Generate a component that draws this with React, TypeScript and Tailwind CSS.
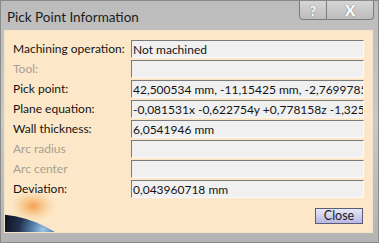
const rows = [
  { label: "Machining operation:", value: "Not machined", enabled: true },
  { label: "Tool:", value: "", enabled: false },
  {
    label: "Pick point:",
    value: "42,500534 mm, -11,15425 mm, -2,7699785 mm",
    enabled: true,
  },
  {
    label: "Plane equation:",
    value: "-0,081531x -0,622754y +0,778158z -1,325789",
    enabled: true,
  },
  { label: "Wall thickness:", value: "6,0541946 mm", enabled: true },
  { label: "Arc radius", value: "", enabled: false },
  { label: "Arc center", value: "", enabled: false },
  { label: "Deviation:", value: "0,043960718 mm", enabled: true },
];

function Globe() {
  return (
    <svg className="absolute left-0 bottom-0" width="70" height="50" viewBox="0 0 70 50">
      <defs>
        <radialGradient id="glow" cx="0.5" cy="0.5" r="0.5">
          <stop offset="0" stopColor="#f39a48" stopOpacity="0.95" />
          <stop offset="0.5" stopColor="#f7c486" stopOpacity="0.6" />
          <stop offset="1" stopColor="#fce8c8" stopOpacity="0" />
        </radialGradient>
        <radialGradient id="planet" gradientUnits="userSpaceOnUse" cx="38" cy="48" r="40">
          <stop offset="0" stopColor="#a4c8e6" />
          <stop offset="0.25" stopColor="#5a86b4" />
          <stop offset="0.6" stopColor="#22324f" />
          <stop offset="1" stopColor="#0c1220" />
        </radialGradient>
      </defs>
      <ellipse cx="28" cy="24" rx="26" ry="18" fill="url(#glow)" />
      <circle cx="-12" cy="147" r="115" fill="url(#planet)" />
    </svg>
  );
}

export default function App() {
  return (
    <div
      className="w-[379px] h-[243px] relative overflow-hidden bg-gradient-to-b from-[#bcbcbc] via-[#c8c8c8] to-[#b4b4b4] border border-[#8a8a8a] text-[#1a1a1a]"
      style={{ fontFamily: 'Lato, "Open Sans", sans-serif' }}
    >
      <div className="h-[29px] flex items-start justify-between">
        <div className="pl-[6px] pt-[6px] text-[13.5px] text-[#1c1c1c]">
          Pick Point Information
        </div>
        <div className="flex mr-[4px] -mt-px">
          <div className="w-[28px] h-[20px] flex items-center justify-center rounded-bl-[4px] border border-[#7c7c7c] bg-gradient-to-b from-[#d6d6d6] to-[#bdbdbd] text-[14px] font-black text-white [text-shadow:0_0_1px_#444]">
            ?
          </div>
          <div className="w-[47px] h-[20px] flex items-center justify-center rounded-br-[4px] border border-l-0 border-[#7c7c7c] bg-gradient-to-b from-[#d6d6d6] to-[#bdbdbd] text-[15px] font-black text-white [text-shadow:0_0_1px_#444]">
            X
          </div>
        </div>
      </div>

      <div className="relative ml-[3px] w-[369px] h-[203px] border border-[#f4e4c6] bg-[#fce8c8] pt-[9px] pl-[8px] pr-[8px] overflow-hidden">
        <Globe />
        <div className="relative flex flex-col gap-[2px]">
          {rows.map((r) => (
            <div key={r.label} className="flex items-center h-[18px]">
              <div
                className={`w-[118px] whitespace-nowrap text-[12px] leading-none ${
                  r.enabled ? "text-[#141414]" : "text-[#a89e92]"
                }`}
              >
                {r.label}
              </div>
              <div className="w-[233px] h-[18px] bg-[#f0f0f0] border-t border-l border-[#7a7a7a] border-b-[#fafafa] border-r-[#fafafa] border-b border-r overflow-hidden whitespace-nowrap pl-[1px] text-[12px] leading-[17px] text-[#141414]">
                {r.value}
              </div>
            </div>
          ))}
        </div>
        <div className="relative flex justify-end mt-[10px] pr-[1px]">
          <div className="w-[48px] h-[16px] flex items-center justify-center border border-[#5c5c78] bg-gradient-to-b from-[#e8e8f8] to-[#b8b8e2] text-[12.5px] leading-none">
            Close
          </div>
        </div>
      </div>
    </div>
  );
}
